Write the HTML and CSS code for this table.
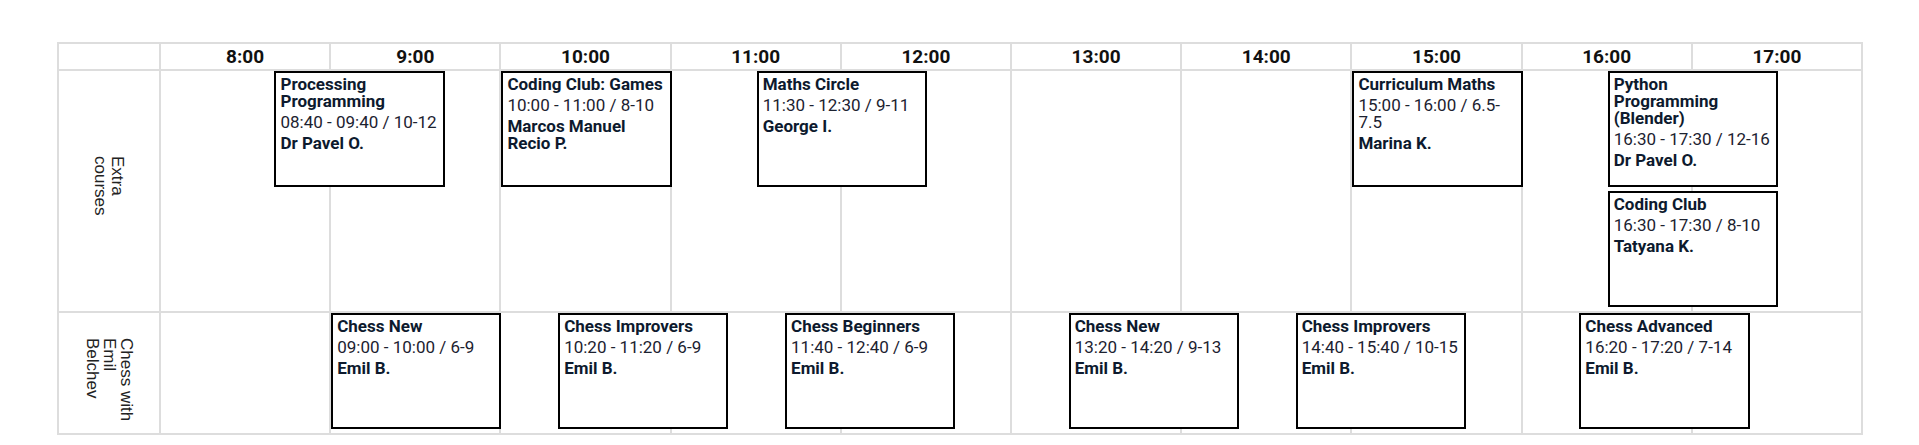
FILE: index.html
```html
<!DOCTYPE html>
<html lang="en">
<head>
<meta charset="utf-8">
<title>Timetable</title>
<link rel="stylesheet" href="styles.css">
</head>
<body>
<div class="timetable">
  <div class="row head">
    <div class="label"></div>
    <div class="track">
      <div class="lines">
        <div class="hour">8:00</div>
        <div class="hour">9:00</div>
        <div class="hour">10:00</div>
        <div class="hour">11:00</div>
        <div class="hour">12:00</div>
        <div class="hour">13:00</div>
        <div class="hour">14:00</div>
        <div class="hour">15:00</div>
        <div class="hour">16:00</div>
        <div class="hour">17:00</div>
      </div>
    </div>
  </div>

  <div class="row">
    <div class="label"><span class="label-text">Extra<br>courses</span></div>
    <div class="track">
      <div class="lines">
        <div></div><div></div><div></div><div></div><div></div>
        <div></div><div></div><div></div><div></div><div></div>
      </div>
      <div class="events">
        <div class="event" style="grid-column: 5 / span 6">
          <div class="title">Processing Programming</div>
          <div class="time">08:40 - 09:40 / 10-12</div>
          <div class="who">Dr Pavel O.</div>
        </div>
        <div class="event" style="grid-column: 13 / span 6">
          <div class="title">Coding Club: Games</div>
          <div class="time">10:00 - 11:00 / 8-10</div>
          <div class="who">Marcos Manuel Recio P.</div>
        </div>
        <div class="event" style="grid-column: 22 / span 6">
          <div class="title">Maths Circle</div>
          <div class="time">11:30 - 12:30 / 9-11</div>
          <div class="who">George I.</div>
        </div>
        <div class="event" style="grid-column: 43 / span 6">
          <div class="title">Curriculum Maths</div>
          <div class="time">15:00 - 16:00 / 6.5-7.5</div>
          <div class="who">Marina K.</div>
        </div>
        <div class="event" style="grid-column: 52 / span 6">
          <div class="title">Python Programming (Blender)</div>
          <div class="time">16:30 - 17:30 / 12-16</div>
          <div class="who">Dr Pavel O.</div>
        </div>
        <div class="event lane-2" style="grid-column: 52 / span 6">
          <div class="title">Coding Club</div>
          <div class="time">16:30 - 17:30 / 8-10</div>
          <div class="who">Tatyana K.</div>
        </div>
      </div>
    </div>
  </div>

  <div class="row">
    <div class="label"><span class="label-text">Chess with<br>Emil<br>Belchev</span></div>
    <div class="track">
      <div class="lines">
        <div></div><div></div><div></div><div></div><div></div>
        <div></div><div></div><div></div><div></div><div></div>
      </div>
      <div class="events">
        <div class="event" style="grid-column: 7 / span 6">
          <div class="title">Chess New</div>
          <div class="time">09:00 - 10:00 / 6-9</div>
          <div class="who">Emil B.</div>
        </div>
        <div class="event" style="grid-column: 15 / span 6">
          <div class="title">Chess Improvers</div>
          <div class="time">10:20 - 11:20 / 6-9</div>
          <div class="who">Emil B.</div>
        </div>
        <div class="event" style="grid-column: 23 / span 6">
          <div class="title">Chess Beginners</div>
          <div class="time">11:40 - 12:40 / 6-9</div>
          <div class="who">Emil B.</div>
        </div>
        <div class="event" style="grid-column: 33 / span 6">
          <div class="title">Chess New</div>
          <div class="time">13:20 - 14:20 / 9-13</div>
          <div class="who">Emil B.</div>
        </div>
        <div class="event" style="grid-column: 41 / span 6">
          <div class="title">Chess Improvers</div>
          <div class="time">14:40 - 15:40 / 10-15</div>
          <div class="who">Emil B.</div>
        </div>
        <div class="event" style="grid-column: 51 / span 6">
          <div class="title">Chess Advanced</div>
          <div class="time">16:20 - 17:20 / 7-14</div>
          <div class="who">Emil B.</div>
        </div>
      </div>
    </div>
  </div>
</div>
</body>
</html>
```

FILE: styles.css
```css
html, body {
  background: #fff;
}

body {
  margin: 0;
  padding: 42px 56px 0 57px;
  font-family: Roboto, "Noto Sans", sans-serif;
  color: #0d1a2e;
}

.timetable {
  border-left: 2px solid #dddddd;
  border-top: 2px solid #dddddd;
}

.row {
  display: grid;
  grid-template-columns: 102px minmax(0, 1fr);
  border-bottom: 2px solid #dddddd;
}

.label {
  box-sizing: border-box;
  border-right: 2px solid #dddddd;
  display: flex;
  align-items: center;
  justify-content: center;
}

.label-text {
  writing-mode: vertical-rl;
  height: 70px;
  white-space: nowrap;
  font-family: "Liberation Sans", Arial, sans-serif;
  font-size: 17px;
  line-height: 17px;
  color: #222;
}

.track {
  display: grid;
  grid-template-columns: minmax(0, 1fr);
}

.lines {
  grid-area: 1 / 1;
  display: grid;
  grid-template-columns: repeat(10, minmax(0, 1fr));
}

.lines > div {
  box-sizing: border-box;
  border-right: 2px solid #dddddd;
}

.head .track {
  height: 25px;
}

.hour {
  text-align: center;
  font-weight: 700;
  font-size: 19px;
  line-height: 25px;
  color: #111;
}

.events {
  grid-area: 1 / 1;
  display: grid;
  grid-template-columns: repeat(60, minmax(0, 1fr));
  align-content: start;
}

.event {
  grid-row: 1;
  box-sizing: border-box;
  height: 116px;
  margin-bottom: 4px;
  border: 2px solid #000;
  background: #fff;
  padding: 3px 4px 4px;
  overflow: hidden;
}

.event.lane-2 {
  grid-row: 2;
}

.title {
  font-weight: 700;
  font-size: 17px;
  line-height: 17px;
  color: #0d1a2e;
}

.time {
  font-size: 17px;
  line-height: 17px;
  margin-top: 4px;
  color: #1c2230;
}

.who {
  font-weight: 700;
  font-size: 17px;
  line-height: 17px;
  margin-top: 4px;
  color: #0d1a2e;
}
```
